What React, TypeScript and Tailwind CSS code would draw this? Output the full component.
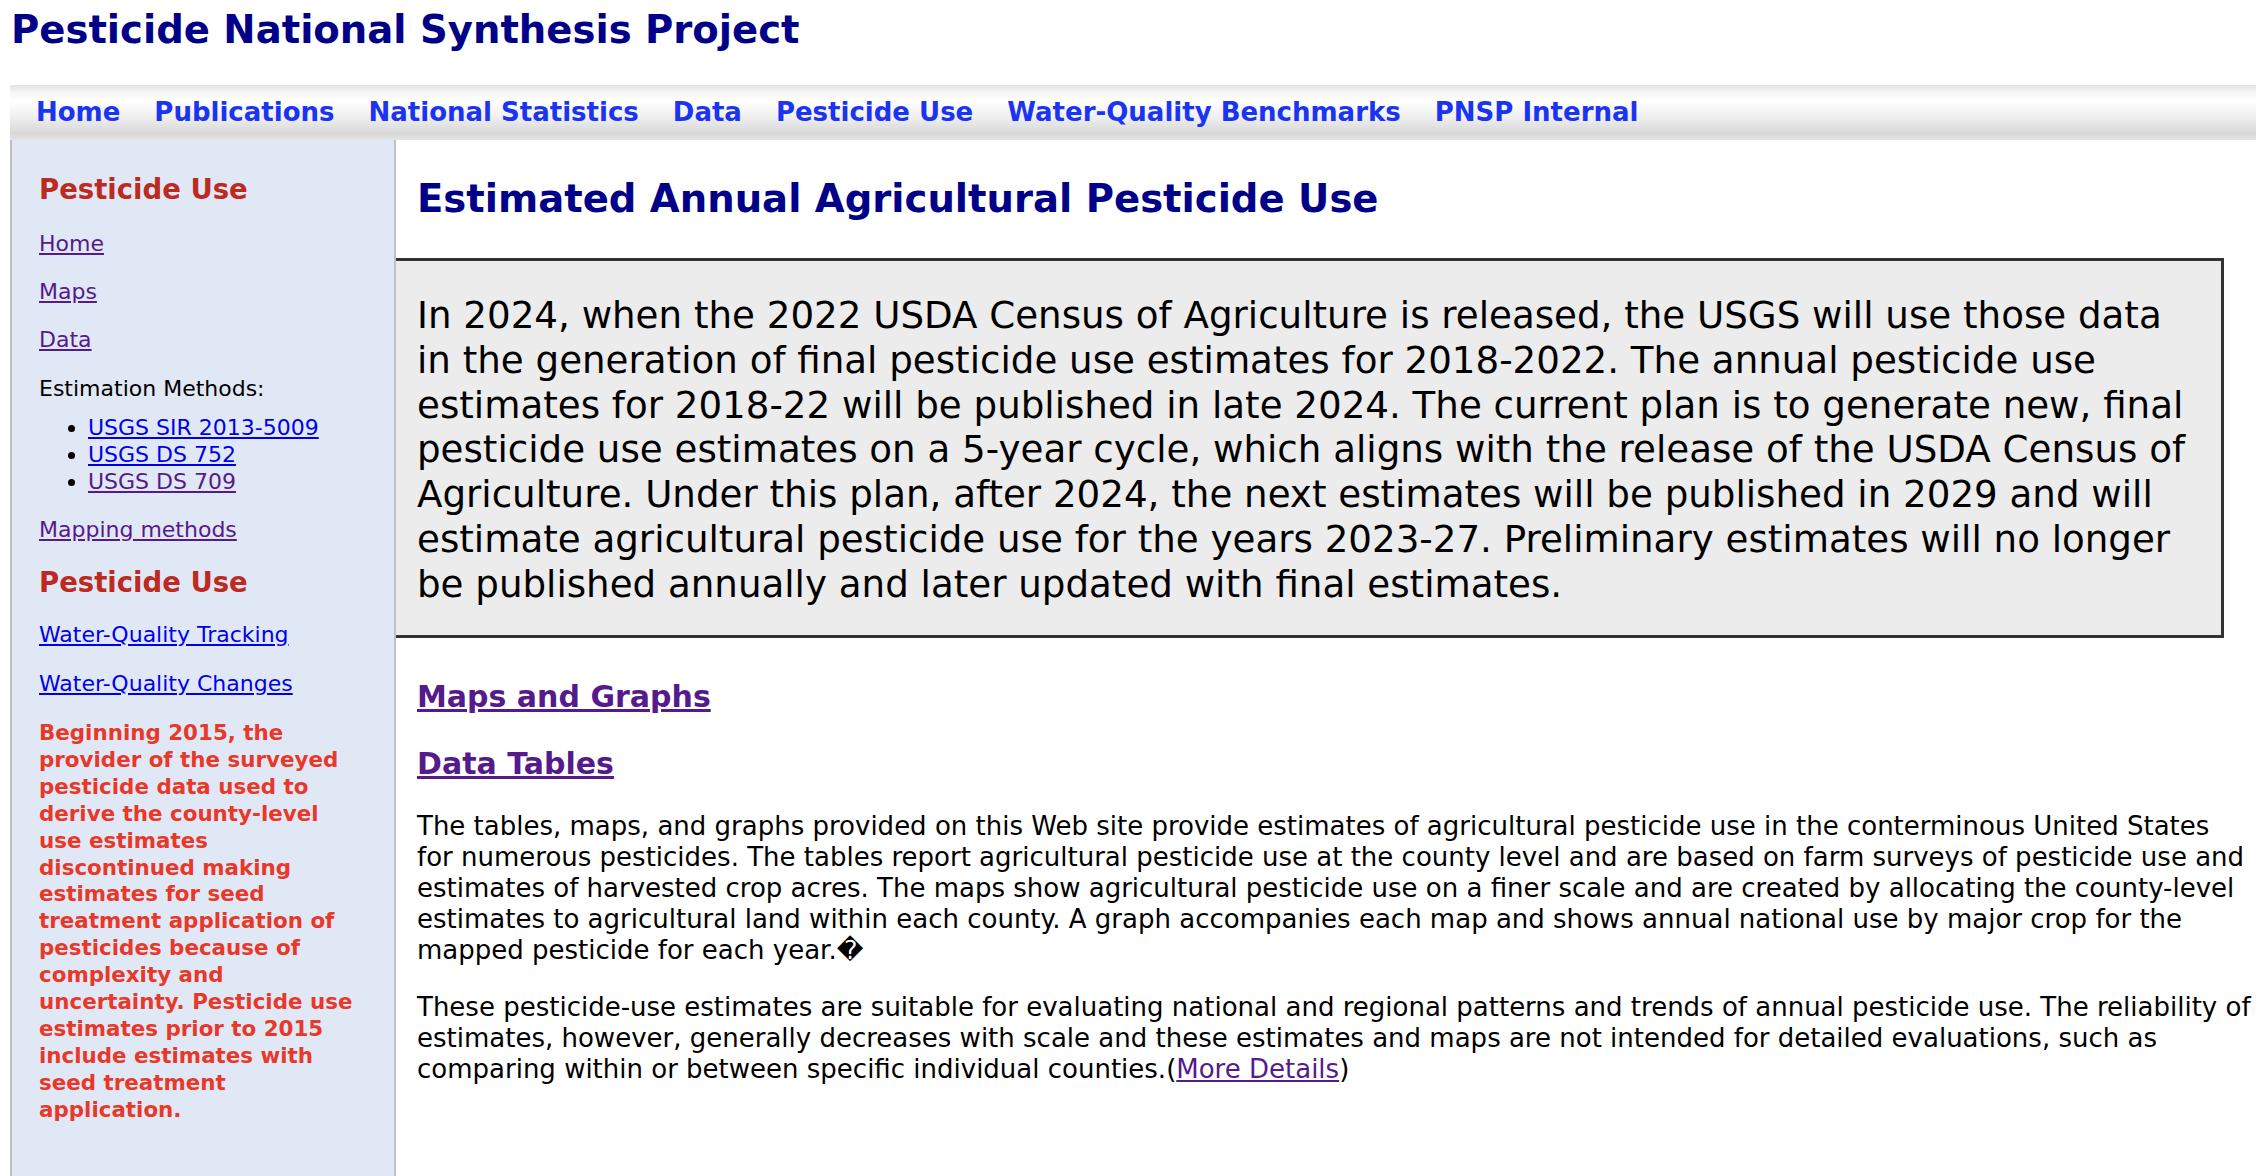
const navItems = [
  "Home",
  "Publications",
  "National Statistics",
  "Data",
  "Pesticide Use",
  "Water-Quality Benchmarks",
  "PNSP Internal",
];

const boxLines = [
  "In 2024, when the 2022 USDA Census of Agriculture is released, the USGS will use those data",
  "in the generation of final pesticide use estimates for 2018-2022. The annual pesticide use",
  "estimates for 2018-22 will be published in late 2024. The current plan is to generate new, final",
  "pesticide use estimates on a 5-year cycle, which aligns with the release of the USDA Census of",
  "Agriculture. Under this plan, after 2024, the next estimates will be published in 2029 and will",
  "estimate agricultural pesticide use for the years 2023-27. Preliminary estimates will no longer",
  "be published annually and later updated with final estimates.",
];

const introLines = [
  "The tables, maps, and graphs provided on this Web site provide estimates of agricultural pesticide use in the conterminous United States",
  "for numerous pesticides. The tables report agricultural pesticide use at the county level and are based on farm surveys of pesticide use and",
  "estimates of harvested crop acres. The maps show agricultural pesticide use on a finer scale and are created by allocating the county-level",
  "estimates to agricultural land within each county. A graph accompanies each map and shows annual national use by major crop for the",
  "mapped pesticide for each year.\uFFFD",
];

const noteLines = [
  "Beginning 2015, the",
  "provider of the surveyed",
  "pesticide data used to",
  "derive the county-level",
  "use estimates",
  "discontinued making",
  "estimates for seed",
  "treatment application of",
  "pesticides because of",
  "complexity and",
  "uncertainty. Pesticide use",
  "estimates prior to 2015",
  "include estimates with",
  "seed treatment",
  "application.",
];

function Lines({ lines }: { lines: string[] }) {
  return (
    <>
      {lines.map((l, i) => (
        <span key={i} className="block">
          {l}
        </span>
      ))}
    </>
  );
}

function SideLink({ label, visited, className }: { label: string; visited?: boolean; className?: string }) {
  return (
    <a
      href="#"
      className={
        "block w-fit underline " + (visited ? "text-[#551a8b] " : "text-[#0000ee] ") + (className ?? "")
      }
    >
      {label}
    </a>
  );
}

function Sidebar() {
  return (
    <aside className="ml-[10px] min-h-[1036px] w-[386px] shrink-0 border-l-2 border-r-2 border-l-[#bdbdbd] border-r-[#c2c2c2] bg-[#e1e8f5] pl-[27px] pt-[32px] text-[22px] leading-[27px]">
      <h2 className="text-[27.5px] font-bold leading-[34px] text-[#bd2a1f]">Pesticide Use</h2>
      <SideLink label="Home" visited className="mt-[24px]" />
      <SideLink label="Maps" visited className="mt-[21px]" />
      <SideLink label="Data" visited className="mt-[21px]" />
      <p className="mt-[22px] text-black">Estimation Methods:</p>
      <ul className="mt-[12px] list-disc pl-[49px]">
        <li>
          <a href="#" className="text-[#0000ee] underline">USGS SIR 2013-5009</a>
        </li>
        <li>
          <a href="#" className="text-[#0000ee] underline">USGS DS 752</a>
        </li>
        <li>
          <a href="#" className="text-[#551a8b] underline">USGS DS 709</a>
        </li>
      </ul>
      <SideLink label="Mapping methods" visited className="mt-[21px]" />
      <h2 className="mt-[22px] text-[27.5px] font-bold leading-[34px] text-[#bd2a1f]">Pesticide Use</h2>
      <SideLink label="Water-Quality Tracking" className="mt-[22px]" />
      <SideLink label="Water-Quality Changes" className="mt-[22px]" />
      <p className="mt-[23px] whitespace-nowrap text-[21.4px] font-bold leading-[26.9px] text-[#e8382a]">
        <Lines lines={noteLines} />
      </p>
    </aside>
  );
}

export default function App() {
  return (
    <div className="min-h-screen bg-white font-['Verdana','DejaVu_Sans',sans-serif] text-black">
      <h1 className="pl-[11px] pt-[6px] text-[38.6px] font-bold leading-[47px] text-[#000088]">
        Pesticide National Synthesis Project
      </h1>

      <nav className="ml-[10px] mr-[8px] mt-[32px] flex h-[55px] items-center gap-[34px] bg-[linear-gradient(to_bottom,#e2e2e2_0%,#f6f6f6_14%,#ffffff_30%,#eeeeee_60%,#d8d8d8_88%,#e4e4e4_100%)] pl-[26px]">
        {navItems.map((item) => (
          <a key={item} href="#" className="text-[26px] font-bold text-[#1a34f2]">
            {item}
          </a>
        ))}
      </nav>

      <div className="flex">
        <Sidebar />
        <main className="min-w-0 flex-1 pt-[35px]">
          <h1 className="pl-[21px] text-[38.6px] font-bold leading-[47px] text-[#000088]">
            Estimated Annual Agricultural Pesticide Use
          </h1>

          <div className="mr-[40px] mt-[36px] border-b-[3px] border-r-[3px] border-t-[3px] border-[#333333] bg-[#ececec] pb-[28px] pl-[21px] pr-[20px] pt-[32px]">
            <p className="whitespace-nowrap text-[37.2px] leading-[44.8px] text-black">
              <Lines lines={boxLines} />
            </p>
          </div>

          <div className="pl-[21px]">
            <h2 className="mt-[41px] text-[30px] font-bold leading-[36px]">
              <a href="#" className="text-[#551a8b] underline">Maps and Graphs</a>
            </h2>
            <h2 className="mt-[31px] text-[30px] font-bold leading-[36px]">
              <a href="#" className="text-[#551a8b] underline">Data Tables</a>
            </h2>
            <p className="mt-[29px] whitespace-nowrap text-[26px] leading-[31px]">
              <Lines lines={introLines} />
            </p>
            <p className="mt-[26px] whitespace-nowrap text-[26px] leading-[31px]">
              <span className="block">
                These pesticide-use estimates are suitable for evaluating national and regional patterns and trends of annual pesticide use. The reliability of
              </span>
              <span className="block">
                estimates, however, generally decreases with scale and these estimates and maps are not intended for detailed evaluations, such as
              </span>
              <span className="block">
                comparing within or between specific individual counties.(
                <a href="#" className="text-[#551a8b] underline">More Details</a>)
              </span>
            </p>
          </div>
        </main>
      </div>
    </div>
  );
}
